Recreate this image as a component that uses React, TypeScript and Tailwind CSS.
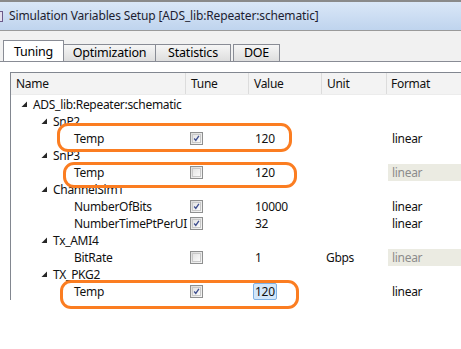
import React from "react";

type Row = {
  level: number;
  label: string;
  group?: boolean;
  tune?: "on" | "off";
  value?: string;
  unit?: string;
  format?: string;
  dim?: boolean;
  selected?: boolean;
};

const rows: Row[] = [
  { level: 0, label: "ADS_lib:Repeater:schematic", group: true },
  { level: 1, label: "SnP2", group: true },
  { level: 2, label: "Temp", tune: "on", value: "120", format: "linear" },
  { level: 1, label: "SnP3", group: true },
  { level: 2, label: "Temp", tune: "off", value: "120", format: "linear", dim: true },
  { level: 1, label: "ChannelSim1", group: true },
  { level: 2, label: "NumberOfBits", tune: "on", value: "10000", format: "linear" },
  { level: 2, label: "NumberTimePtPerUI", tune: "on", value: "32", format: "linear" },
  { level: 1, label: "Tx_AMI4", group: true },
  { level: 2, label: "BitRate", tune: "off", value: "1", unit: "Gbps", format: "linear", dim: true },
  { level: 1, label: "TX_PKG2", group: true },
  { level: 2, label: "Temp", tune: "on", value: "120", format: "linear", selected: true },
];

function Expander() {
  return (
    <svg width="7" height="7" viewBox="0 0 7 7" className="shrink-0">
      <polygon points="6,0.5 6,6 0.5,6" fill="#262626" />
    </svg>
  );
}

function CheckBox({ on }: { on: boolean }) {
  return (
    <div className="flex h-[13px] w-[13px] items-center justify-center border border-[#8e8f8f] bg-gradient-to-br from-[#dcdcdc] to-[#f6f6f6]">
      <div className="flex h-[9px] w-[9px] items-center justify-center border border-[#c8c8c8] bg-gradient-to-br from-[#e4e4e4] to-[#fbfbfb]">
        {on && (
          <svg width="9" height="9" viewBox="0 0 9 9">
            <path d="M1.5 4.5 L3.6 7 L7.6 1" stroke="#3f4f8f" strokeWidth="1.7" fill="none" />
          </svg>
        )}
      </div>
    </div>
  );
}

function Tab({ label, active, w }: { label: string; active?: boolean; w: string }) {
  return (
    <div
      className={
        active
          ? `${w} -mr-[1px] flex h-[21px] items-start justify-center border border-b-0 border-[#898c95] bg-white pt-[2px] text-[12.5px] tracking-[-0.2px] text-black`
          : `${w} -mr-[1px] flex h-[17px] items-center justify-center border border-b-0 border-[#898c95] bg-gradient-to-b from-[#f6f6f6] to-[#dedede] text-[12.5px] tracking-[-0.2px] text-black`
      }
    >
      {label}
    </div>
  );
}

export default function App() {
  return (
    <div
      className="relative h-[349px] w-[461px] overflow-hidden bg-white text-[12px] tracking-[-0.3px] text-[#111]"
      style={{ fontFamily: '"Noto Sans", "Open Sans", sans-serif' }}
    >
      {/* title bar */}
      <div className="flex h-[31px] items-center border-t-2 border-b border-t-[#8a8a8a] border-b-[#9a9a9a] bg-gradient-to-b from-[#dae7f7] to-[#bfd4ee]">
        <div className="ml-[-6px] mr-[6px] h-[11px] w-[9px] border border-[#6b5a8a] bg-[#e4e0ee]" />
        <span className="text-[12px] tracking-[-0.15px] text-[#1d1d30]">
          Simulation Variables Setup [ADS_lib:Repeater:schematic]
        </span>
      </div>

      {/* tab strip */}
      <div className="flex h-[31px] items-end border-b border-[#898c95] bg-[#f1f1f1] pl-[3px]">
        <Tab label="Tuning" active w="w-[61px]" />
        <Tab label="Optimization" w="w-[93px]" />
        <Tab label="Statistics" w="w-[76px]" />
        <div className="w-[3px]" />
        <Tab label="DOE" w="w-[47px]" />
      </div>

      {/* tab page */}
      <div className="pl-[10px] pt-[10px]">
        <div className="border-l border-t border-[#828790]">
          <div className="flex h-[22px] items-center border-b border-[#ececec] bg-[#f3f3f3]">
            <div className="w-[174px] pl-[5px]">Name</div>
            <div className="h-full w-[63px] border-l border-[#dcdcdc] pl-[5px] leading-[22px]">Tune</div>
            <div className="h-full w-[73px] border-l border-[#dcdcdc] pl-[5px] leading-[22px]">Value</div>
            <div className="h-full w-[65px] border-l border-[#dcdcdc] pl-[5px] leading-[22px]">Unit</div>
            <div className="h-full flex-1 border-l border-[#dcdcdc] pl-[4px] leading-[22px]">Format</div>
          </div>
          <div className="pt-[1px]">
            {rows.map((r, i) => (
              <div key={i} className="flex h-[17px] items-center">
                <div
                  className={
                    r.level === 0
                      ? "flex w-[175px] items-center gap-[5px] pl-[10px]"
                      : r.level === 1
                      ? "flex w-[175px] items-center gap-[5px] pl-[30px]"
                      : "flex w-[175px] items-center pl-[63px]"
                  }
                >
                  {r.group && <Expander />}
                  <span className="whitespace-nowrap">{r.label}</span>
                </div>
                <div className="flex w-[63px] pl-[4px]">
                  {r.tune && <CheckBox on={r.tune === "on"} />}
                </div>
                <div className="w-[73px] pl-[4px]">
                  {r.value && (
                    <span
                      className={
                        r.selected
                          ? "inline-block rounded-[2px] border border-[#7fb2e6] bg-[#d3e7fa] px-[1px] leading-[15px]"
                          : "inline-block border border-transparent px-[1px] leading-[15px]"
                      }
                    >
                      {r.value}
                    </span>
                  )}
                </div>
                <div className="w-[66px] pl-[4px]">{r.unit}</div>
                <div
                  className={
                    r.dim
                      ? "flex h-full flex-1 items-center bg-[#ebebe2] pl-[4px] text-[#8c8c8c]"
                      : "flex h-full flex-1 items-center pl-[4px]"
                  }
                >
                  {r.format}
                </div>
              </div>
            ))}
          </div>
        </div>
      </div>

      {/* orange annotation rings */}
      <div className="absolute left-[57px] top-[123px] h-[29px] w-[235px] rounded-[11px] border-[3px] border-[#fb7d21]" />
      <div className="absolute left-[63px] top-[162px] h-[26px] w-[234px] rounded-[11px] border-[3px] border-[#fb7d21]" />
      <div className="absolute left-[60px] top-[280px] h-[29px] w-[239px] rounded-[11px] border-[3px] border-[#fb7d21]" />
    </div>
  );
}
